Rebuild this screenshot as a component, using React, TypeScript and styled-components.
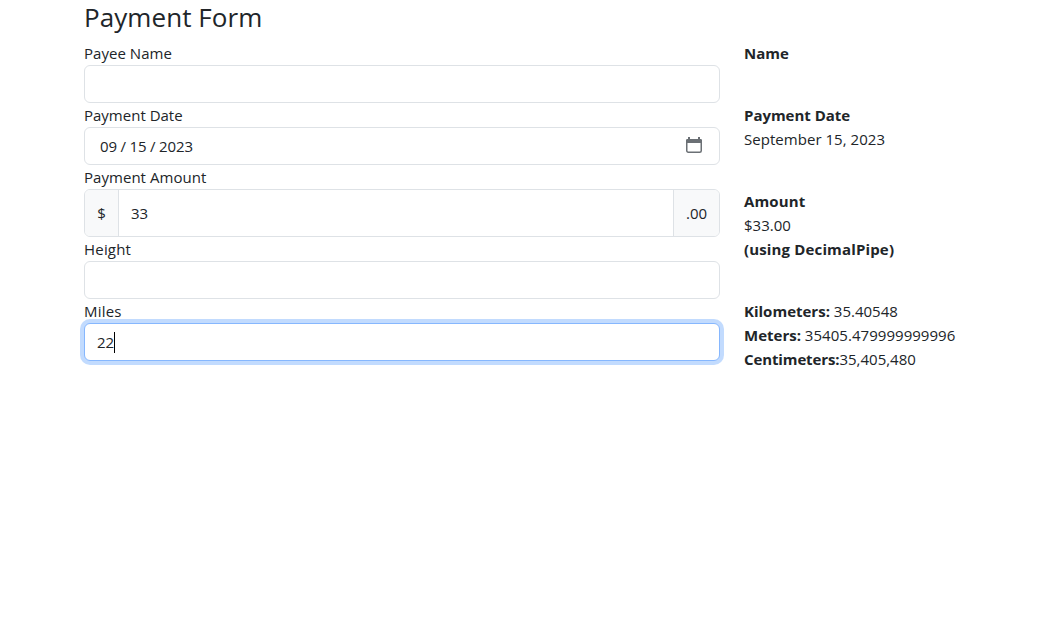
import React from "react";
import styled, { createGlobalStyle, css } from "styled-components";

const GlobalStyle = createGlobalStyle`
  *, *::before, *::after { box-sizing: border-box; }
  body {
    margin: 0;
    background: #fff;
    color: #212529;
    font-family: "Segoe UI", "Open Sans", "Noto Sans", sans-serif;
    font-size: 15px;
    line-height: 24px;
  }
`;

const Page = styled.main`
  padding-left: 84px;
`;

const Title = styled.h3`
  margin: 0;
  height: 41px;
  font-size: 26px;
  font-weight: 400;
  line-height: 35px;
  white-space: nowrap;
`;

const Row = styled.section<{ $offset?: number }>`
  display: grid;
  grid-template-columns: 636px 1fr;
  column-gap: 24px;

  > :last-child {
    padding-top: ${(p) => p.$offset ?? 0}px;
  }
`;

const Label = styled.label`
  display: block;
  height: 24px;
`;

const Text = styled.span<{ $track?: number; $bold?: boolean }>`
  letter-spacing: ${(p) => p.$track ?? 0}px;
  font-weight: ${(p) => (p.$bold ? 700 : 400)};
  white-space: pre;
`;

const Control = styled.div<{ $focused?: boolean }>`
  display: flex;
  align-items: center;
  height: 38px;
  padding: 0 12px;
  border: 1px solid #dee2e6;
  border-radius: 6px;
  background: #fff;
  ${(p) =>
    p.$focused &&
    css`
      border-color: #86b7fe;
      box-shadow: 0 0 0 4px rgba(13, 110, 253, 0.25);
    `}
`;

const DateControl = styled(Control)`
  justify-content: space-between;
  padding: 0 16px 0 15px;
  word-spacing: -0.5px;
`;

const Group = styled.div`
  display: flex;
  height: 48px;
  border: 1px solid #dee2e6;
  border-radius: 6px;
  overflow: hidden;
`;

const Addon = styled.span<{ $width: number }>`
  display: flex;
  align-items: center;
  justify-content: center;
  width: ${(p) => p.$width}px;
  background: #f8f9fa;
`;

const Amount = styled.div`
  display: flex;
  flex: 1;
  align-items: center;
  padding: 0 12px;
  border: solid #dee2e6;
  border-width: 0 1px;
`;

const Caret = styled.span`
  width: 1px;
  height: 21px;
  background: #000;
`;

const Line = styled.div`
  height: 24px;
  white-space: nowrap;
`;

const Icon = styled.svg`
  display: block;
  margin-bottom: 2px;
`;

const CalendarIcon = () => (
  <Icon width="18" height="18" viewBox="0 0 18 18" fill="none">
    <path d="M4 1v3M14 1v3" stroke="#6b7075" strokeWidth="2" />
    <rect x="1.75" y="3.75" width="14.5" height="12.5" rx="1.5" stroke="#6b7075" strokeWidth="1.5" />
    <path d="M2 3h14l1 1v3H1V4z" fill="#6b7075" />
  </Icon>
);

export default function App() {
  return (
    <>
      <GlobalStyle />
      <Page>
        <Title><Text $track={0.07}>Payment Form</Text></Title>
        <Row>
          <div>
            <Label><Text $track={0.04}>Payee Name</Text></Label>
            <Control />
          </div>
          <div>
            <Line><Text $bold>Name</Text></Line>
          </div>
        </Row>
        <Row>
          <div>
            <Label><Text>Payment Date</Text></Label>
            <DateControl>
              <Text>09 / 15 / 2023</Text>
              <CalendarIcon />
            </DateControl>
          </div>
          <div>
            <Line><Text $bold $track={-0.03}>Payment Date</Text></Line>
            <Line><Text $track={0.04}>September 15, 2023</Text></Line>
          </div>
        </Row>
        <Row $offset={24}>
          <div>
            <Label><Text $track={0.04}>Payment Amount</Text></Label>
            <Group>
              <Addon $width={33}><Text>$</Text></Addon>
              <Amount><Text>33</Text></Amount>
              <Addon $width={45}><Text>.00</Text></Addon>
            </Group>
          </div>
          <div>
            <Line><Text $bold $track={0.12}>Amount</Text></Line>
            <Line><Text>$33.00</Text></Line>
          </div>
        </Row>
        <Row>
          <div>
            <Label><Text $track={0.2}>Height</Text></Label>
            <Control />
          </div>
          <div>
            <Line><Text $bold $track={0.15}>(using DecimalPipe)</Text></Line>
          </div>
        </Row>
        <Row>
          <div>
            <Label><Text $track={0.2}>Miles</Text></Label>
            <Control $focused><Text>22</Text><Caret /></Control>
          </div>
          <div>
            <Line><Text $bold>Kilometers:</Text><Text> 35.40548</Text></Line>
            <Line><Text $bold>Meters:</Text><Text $track={0.04}> 35405.479999999996</Text></Line>
            <Line><Text $bold $track={-0.12}>Centimeters:</Text><Text>35,405,480</Text></Line>
          </div>
        </Row>
      </Page>
    </>
  );
}
